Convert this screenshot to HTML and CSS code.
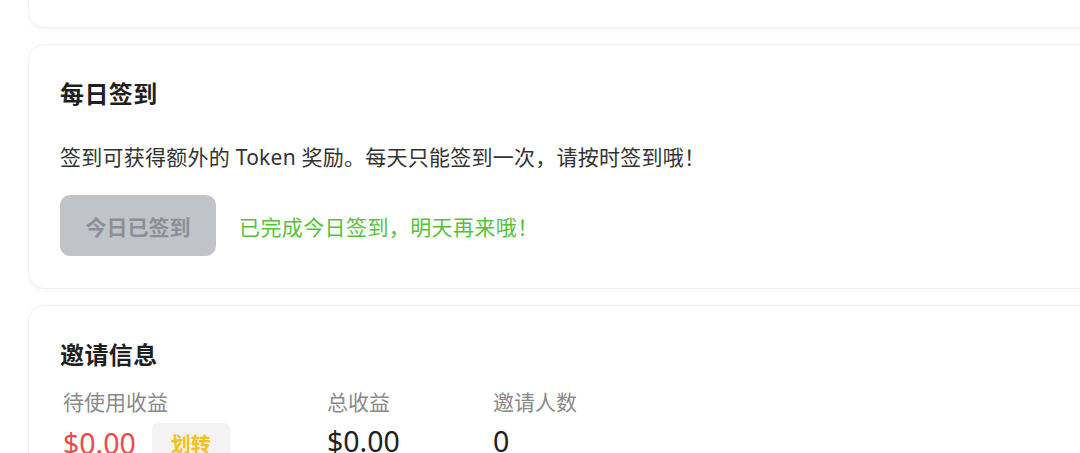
FILE: index.html
```html
<!DOCTYPE html>
<html lang="zh-CN">
<head>
<meta charset="utf-8">
<title>签到</title>
<link rel="stylesheet" href="styles.css">
</head>
<body>
<div class="page">
  <section class="card card-prev"></section>

  <section class="card">
    <h2 class="card-title">每日签到</h2>
    <p class="desc">签到可获得额外的 Token 奖励。每天只能签到一次，请按时签到哦！</p>
    <div class="checkin-row">
      <button class="btn-checked" disabled>今日已签到</button>
      <span class="done-text">已完成今日签到，明天再来哦！</span>
    </div>
  </section>

  <section class="card">
    <h2 class="card-title">邀请信息</h2>
    <div class="stats">
      <div class="stat">
        <div class="stat-label">待使用收益</div>
        <div class="stat-value-row">
          <span class="stat-value red">$0.00</span>
          <button class="btn-transfer">划转</button>
        </div>
      </div>
      <div class="stat">
        <div class="stat-label">总收益</div>
        <div class="stat-value-row">
          <span class="stat-value">$0.00</span>
        </div>
      </div>
      <div class="stat">
        <div class="stat-label">邀请人数</div>
        <div class="stat-value-row">
          <span class="stat-value">0</span>
        </div>
      </div>
    </div>
  </section>
</div>
</body>
</html>
```

FILE: styles.css
```css
html, body {
  margin: 0;
  padding: 0;
  background: #ffffff;
  overflow: hidden;
}

body {
  font-family: "Noto Sans", "Noto Sans CJK SC", sans-serif;
  color: #333333;
}

.page {
  margin-top: -72px;
  padding-left: 28px;
  width: 1120px;
}

.card {
  background: #ffffff;
  border: 1px solid #f1f1f1;
  border-radius: 16px;
  box-shadow: 0 2px 6px rgba(0, 0, 0, 0.035);
  padding: 32px 32px 32px 31px;
  margin-bottom: 16px;
}

.card-prev {
  height: 34px;
}

.card-title {
  margin: 0;
  font-size: 24px;
  line-height: 34px;
  font-weight: 700;
  color: #1f1f1f;
  letter-spacing: 0.4px;
}

.desc {
  margin: 30px 0 0;
  font-size: 21px;
  line-height: 32px;
  color: #333333;
  letter-spacing: 0.25px;
}

.checkin-row {
  display: flex;
  align-items: center;
  gap: 23px;
  margin-top: 22px;
}

.btn-checked {
  width: 156px;
  height: 61px;
  border: none;
  border-radius: 10px;
  background: #c0c3c8;
  color: #8c8f95;
  font-family: inherit;
  font-size: 21px;
  font-weight: 700;
  padding: 0;
}

.done-text {
  font-size: 21px;
  color: #55c23c;
  letter-spacing: 0.4px;
}

.stats {
  display: grid;
  grid-template-columns: 264px 166px auto;
  margin-top: 16px;
  padding-left: 3px;
}

.stat-label {
  font-size: 21px;
  line-height: 28px;
  color: #8a8a8a;
}

.stat-value-row {
  display: flex;
  align-items: center;
  gap: 16px;
  margin-top: 7px;
}

.stat-value {
  font-size: 28.5px;
  line-height: 36px;
  color: #222222;
}

.stat-value.red {
  color: #ef4b4b;
}

.btn-transfer {
  border: none;
  background: #f3f3f4;
  color: #f4c21b;
  font-family: inherit;
  font-size: 20px;
  font-weight: 700;
  border-radius: 6px;
  width: 78px;
  height: 40px;
  padding: 0;
}
```
